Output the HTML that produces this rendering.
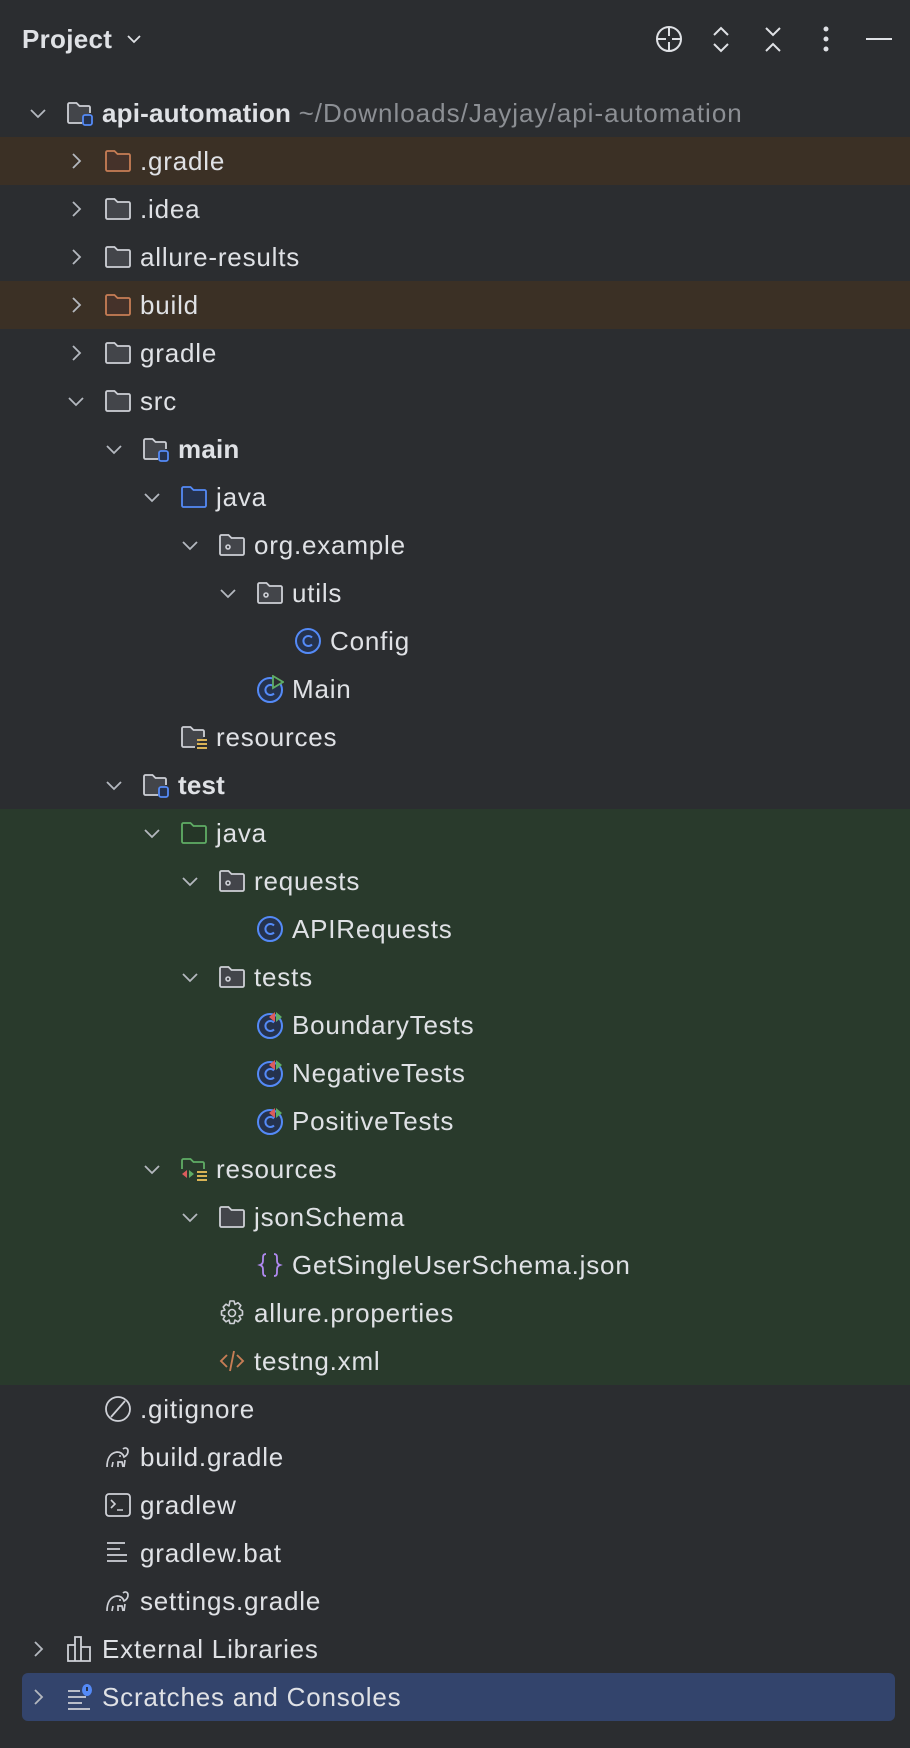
<!DOCTYPE html>
<html><head><meta charset="utf-8"><style>
body{margin:0;width:910px;height:1748px;background:#2b2d30;font-family:"Liberation Sans",sans-serif;color:#dfe1e5;position:relative;overflow:hidden}
.bg{position:absolute;left:0;width:910px}
.row{position:absolute;left:0;height:48px;width:910px}
.t{position:absolute;top:0;line-height:48px;font-size:26px;letter-spacing:0.8px;white-space:nowrap}
.ic{position:absolute;top:10px;width:28px;height:28px}
.ch{position:absolute;top:14px;width:20px;height:20px}
</style></head><body>
<div class="bg" style="top:137px;height:48px;background:#3b3025"></div>
<div class="bg" style="top:281px;height:48px;background:#3b3025"></div>
<div class="bg" style="top:809px;height:576px;background:#293a2c"></div>
<div style="position:absolute;left:22px;top:1673px;width:873px;height:48px;background:#33446c;border-radius:6px"></div>

<div style="position:absolute;left:22px;top:20px;font-size:26px;font-weight:bold;line-height:38px;letter-spacing:0.3px">Project</div>
<svg style="position:absolute;left:126px;top:32px" width="16" height="14"><path d="M2 4l6 6 6-6" stroke="#dfe1e5" stroke-width="1.8" fill="none"/></svg>
<svg style="position:absolute;left:655px;top:25px" width="420" height="30" fill="none" stroke="#dfe1e5" stroke-width="2">
<circle cx="14" cy="14" r="12"/><path d="M14 2v9M14 17v9M2 14h9M17 14h9"/>
<path d="M59 10l7-7 7 7M59 19l7 7 7-7"/>
<path d="M111 3l7 7 7-7M111 26l7-7 7 7"/>
<circle cx="171" cy="4" r="1.5" fill="#dfe1e5"/><circle cx="171" cy="14" r="1.5" fill="#dfe1e5"/><circle cx="171" cy="24" r="1.5" fill="#dfe1e5"/>
<path d="M211 14h26"/>
</svg>

<svg width="0" height="0" style="position:absolute">
<defs>
<symbol id="chd" viewBox="0 0 20 20"><path d="M3 7l7 7 7-7" stroke="#b4b8bf" stroke-width="1.8" fill="none"/></symbol>
<symbol id="chr" viewBox="0 0 20 20"><path d="M7 3l7 7-7 7" stroke="#b4b8bf" stroke-width="1.8" fill="none"/></symbol>
<symbol id="fg" viewBox="0 0 28 28"><path d="M2 5.5a1.5 1.5 0 0 1 1.5-1.5h7l3 3h11a1.5 1.5 0 0 1 1.5 1.5v14a1.5 1.5 0 0 1-1.5 1.5h-21A1.5 1.5 0 0 1 2 22.5z" fill="#43454a" stroke="#ced0d6" stroke-width="1.8"/></symbol>
<symbol id="fo" viewBox="0 0 28 28"><path d="M2 5.5a1.5 1.5 0 0 1 1.5-1.5h7l3 3h11a1.5 1.5 0 0 1 1.5 1.5v14a1.5 1.5 0 0 1-1.5 1.5h-21A1.5 1.5 0 0 1 2 22.5z" fill="#45322a" stroke="#c77d55" stroke-width="1.8"/></symbol>
<symbol id="fb" viewBox="0 0 28 28"><path d="M2 5.5a1.5 1.5 0 0 1 1.5-1.5h7l3 3h11a1.5 1.5 0 0 1 1.5 1.5v14a1.5 1.5 0 0 1-1.5 1.5h-21A1.5 1.5 0 0 1 2 22.5z" fill="#25324d" stroke="#548af7" stroke-width="1.8"/></symbol>
<symbol id="fgr" viewBox="0 0 28 28"><path d="M2 5.5a1.5 1.5 0 0 1 1.5-1.5h7l3 3h11a1.5 1.5 0 0 1 1.5 1.5v14a1.5 1.5 0 0 1-1.5 1.5h-21A1.5 1.5 0 0 1 2 22.5z" fill="#253627" stroke="#5fad65" stroke-width="1.8"/></symbol>
<symbol id="fm" viewBox="0 0 28 28"><path d="M16 24H3.5A1.5 1.5 0 0 1 2 22.5v-17A1.5 1.5 0 0 1 3.5 4h7l3 3h9a1.5 1.5 0 0 1 1.5 1.5V14" fill="#43454a" stroke="#ced0d6" stroke-width="1.8"/><rect x="17" y="16" width="9" height="10" rx="2" fill="#25324d" stroke="#548af7" stroke-width="1.8"/></symbol>
<symbol id="fp" viewBox="0 0 28 28"><path d="M2 5.5a1.5 1.5 0 0 1 1.5-1.5h7l3 3h11a1.5 1.5 0 0 1 1.5 1.5v14a1.5 1.5 0 0 1-1.5 1.5h-21A1.5 1.5 0 0 1 2 22.5z" fill="#43454a" stroke="#ced0d6" stroke-width="1.8"/><circle cx="10" cy="16" r="2" fill="none" stroke="#ced0d6" stroke-width="1.6"/></symbol>
<symbol id="fr" viewBox="0 0 28 28"><path d="M15 24H3.5A1.5 1.5 0 0 1 2 22.5v-17A1.5 1.5 0 0 1 3.5 4h7l3 3h9a1.5 1.5 0 0 1 1.5 1.5V14" fill="#43454a" stroke="#ced0d6" stroke-width="1.8"/><path d="M17 17h10M17 21h10M17 25h10" stroke="#f2c55c" stroke-width="1.8"/></symbol>
<symbol id="ftr" viewBox="0 0 28 28"><path d="M2 14V5.5A1.5 1.5 0 0 1 3.5 4h7l3 3h9a1.5 1.5 0 0 1 1.5 1.5V14" fill="none" stroke="#5fad65" stroke-width="1.8"/><path d="M7 15l-5 4 5 4z" fill="#db5c5c"/><path d="M9 15l5 4-5 4z" fill="#5fad65"/><path d="M17 17h10M17 21h10M17 25h10" stroke="#f2c55c" stroke-width="1.8"/></symbol>
<symbol id="cl" viewBox="0 0 28 28"><circle cx="14" cy="14" r="12" fill="#25324d" stroke="#548af7" stroke-width="2"/><path d="M18 10.5a5 5 0 1 0 0 7" fill="none" stroke="#548af7" stroke-width="2"/></symbol>
<symbol id="cm" viewBox="0 0 28 28"><circle cx="14" cy="15" r="12" fill="#25324d" stroke="#548af7" stroke-width="2"/><path d="M18 11.5a5 5 0 1 0 0 7" fill="none" stroke="#548af7" stroke-width="2"/><path d="M17 1l10 6-10 6z" fill="#2b2d30" stroke="#5fad65" stroke-width="1.8"/></symbol>
<symbol id="ct" viewBox="0 0 28 28"><circle cx="14" cy="15" r="12" fill="#25324d" stroke="#548af7" stroke-width="2"/><path d="M18 11.5a5 5 0 1 0 0 7" fill="none" stroke="#548af7" stroke-width="2"/><path d="M19 1l-6 5 6 5z" fill="#db5c5c"/><path d="M20 1l6 5-6 5z" fill="#5fad65"/></symbol>
<symbol id="gr" viewBox="0 0 28 28"><path d="M3 24c0-8 3-14 10-15 4 0 6 2 7 5 2-1 4-3 4-6 0-3-3-4-5-2M8 24l1-5M14 24l0-5 4 0 1 5M20 24l1-7" fill="none" stroke="#ced0d6" stroke-width="1.7"/><circle cx="16" cy="13" r="1" fill="#ced0d6"/></symbol>
</defs></svg>

<div id="tree"></div>
<script>
var R=[
[0,'d','fm','api-automation',1],
[1,'r','fo','.gradle'],[1,'r','fg','.idea'],[1,'r','fg','allure-results'],[1,'r','fo','build'],[1,'r','fg','gradle'],[1,'d','fg','src'],
[2,'d','fm','main',1],[3,'d','fb','java'],[4,'d','fp','org.example'],[5,'d','fp','utils'],[6,'','cl','Config'],[5,'','cm','Main'],[3,'','fr','resources'],
[2,'d','fm','test',1],[3,'d','fgr','java'],[4,'d','fp','requests'],[5,'','cl','APIRequests'],[4,'d','fp','tests'],[5,'','ct','BoundaryTests'],[5,'','ct','NegativeTests'],[5,'','ct','PositiveTests'],
[3,'d','ftr','resources'],[4,'d','fg','jsonSchema'],[5,'','json','GetSingleUserSchema.json'],[4,'','gear','allure.properties'],[4,'','xml','testng.xml'],
[1,'','git','.gitignore'],[1,'','gr','build.gradle'],[1,'','term','gradlew'],[1,'','txt','gradlew.bat'],[1,'','gr','settings.gradle'],
[0,'r','lib','External Libraries'],[0,'r','scr','Scratches and Consoles']];
var custom={
json:'<svg class="ic" viewBox="0 0 28 28"><path d="M10 3c-3 0-3 2-3 5s0 5-3 6c3 1 3 3 3 6s0 5 3 5M18 3c3 0 3 2 3 5s0 5 3 6c-3 1-3 3-3 6s0 5-3 5" fill="none" stroke="#b089f0" stroke-width="1.8"/></svg>',
gear:'<svg class="ic" viewBox="0 0 28 28"><path d="M12 2h4l1 3.5 3-1.8 2.8 2.8-1.8 3L24.5 12v4L21 17l1.8 3-2.8 2.8-3-1.8-1 3.5h-4l-1-3.5-3 1.8-2.8-2.8 1.8-3L3.5 16v-4L7 11 5.2 8l2.8-2.8 3 1.8z" fill="none" stroke="#ced0d6" stroke-width="1.6" stroke-linejoin="round"/><circle cx="14" cy="14" r="3.5" fill="none" stroke="#ced0d6" stroke-width="1.6"/></svg>',
xml:'<svg class="ic" viewBox="0 0 28 28"><path d="M9 8l-6 6 6 6M19 8l6 6-6 6M16 4l-4 20" fill="none" stroke="#c77d55" stroke-width="1.9"/></svg>',
git:'<svg class="ic" viewBox="0 0 28 28"><circle cx="14" cy="14" r="12" fill="none" stroke="#ced0d6" stroke-width="1.8"/><path d="M7 22L21 6" stroke="#ced0d6" stroke-width="1.8"/></svg>',
term:'<svg class="ic" viewBox="0 0 28 28"><rect x="2" y="3" width="24" height="22" rx="3" fill="none" stroke="#ced0d6" stroke-width="1.8"/><path d="M7 9l4 4-4 4M13 19h6" fill="none" stroke="#ced0d6" stroke-width="1.6"/></svg>',
txt:'<svg class="ic" viewBox="0 0 28 28"><path d="M3 4h18M3 10h13M3 16h20M3 22h20" stroke="#ced0d6" stroke-width="1.8"/></svg>',
lib:'<svg class="ic" viewBox="0 0 28 28"><path d="M2 10h7v16H2zM9 2h6v24H9zM15 12h9v14h-9z" fill="none" stroke="#ced0d6" stroke-width="1.8"/></svg>',
scr:'<svg class="ic" viewBox="0 0 28 28"><path d="M2 8h12M2 14h18M2 20h14M2 26h22" stroke="#ced0d6" stroke-width="1.8"/><ellipse cx="21" cy="7" rx="5" ry="6" fill="#548af7"/><path d="M21 4v4" stroke="#1e1f22" stroke-width="1.6"/></svg>'
};
var h='';
R.forEach(function(r,i){
 var lv=r[0],top=89+48*i,tx=102+38*lv;
 h+='<div class="row" style="top:'+top+'px">';
 if(r[1]) h+='<svg class="ch" style="left:'+(tx-74)+'px"><use href="#ch'+r[1]+'"/></svg>';
 var il=tx-36;
 if(custom[r[2]]) h+=custom[r[2]].replace('class="ic"','class="ic" style="left:'+il+'px"');
 else h+='<svg class="ic" style="left:'+il+'px" viewBox="0 0 28 28"><use href="#'+r[2]+'"/></svg>';
 h+='<div class="t" style="left:'+tx+'px;'+(r[4]?'font-weight:bold;letter-spacing:0.2px':'')+'">'+r[3]+(i==0?' <span style="font-weight:normal;letter-spacing:1px;color:#8c8f94">~/Downloads/Jayjay/api-automation</span>':'')+'</div></div>';
});
document.getElementById('tree').innerHTML=h;
</script>
</body></html>
